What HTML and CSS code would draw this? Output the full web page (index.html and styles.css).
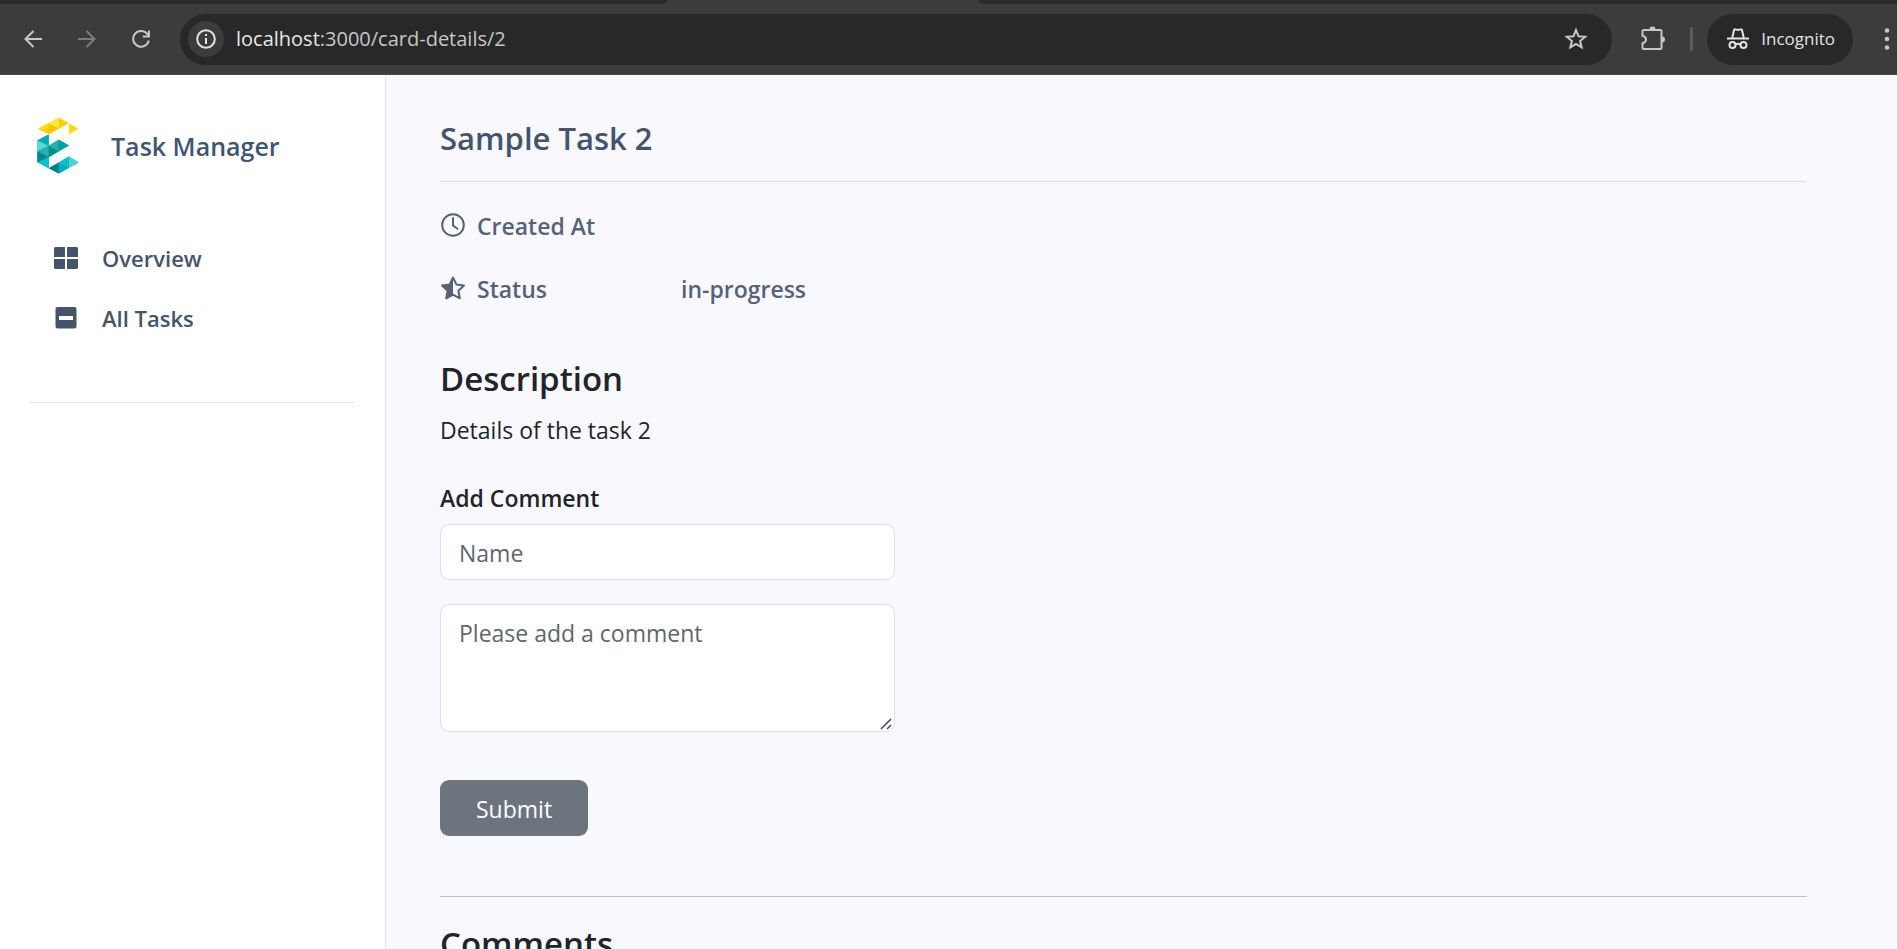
FILE: index.html
```html
<!DOCTYPE html>
<html lang="en">
<head>
<meta charset="utf-8">
<title>Task Manager</title>
<link rel="stylesheet" href="styles.css">
</head>
<body>
<header class="browser">
  <div class="tabstrip"><div class="tab tab-left"></div><div class="tab tab-right"></div></div>
  <div class="toolbar">
    <button class="tool" aria-label="Back"><svg width="18" height="18" viewBox="0 0 18 18"><path d="M9.5 1 1.5 9l8 8M1.5 9H18"/></svg></button>
    <button class="tool tool-disabled" aria-label="Forward" disabled><svg width="18" height="18" viewBox="0 0 18 18"><path d="m8.5 1 8 8-8 8M16.5 9H0"/></svg></button>
    <button class="tool" aria-label="Reload"><svg width="18" height="18" viewBox="0 0 18 18"><path d="M16.8 10.5A7.900 7.900 0 1 1 15 3.600L16.5 5.500M16.900.5V6.500H10.800"/></svg></button>
    <div class="address">
      <button class="site-info" aria-label="View site information"><svg width="20" height="20" viewBox="0 0 20 20"><circle cx="10" cy="10" r="8.800"/><path d="M10 9v6M10 5v2"/></svg></button>
      <div class="url"><span class="host">localhost</span>:3000/card-details/2</div>
      <button class="bookmark" aria-label="Bookmark this tab"><svg width="24" height="24" viewBox="0 0 24 24"><path d="m12 3 2.500 6.200 6.700.5-5.100 4.300 1.600 6.400L12 17l-5.700 3.400L7.900 14 2.800 9.700l6.700-.5z"/></svg></button>
    </div>
    <button class="extensions" aria-label="Extensions"><svg width="26" height="26" viewBox="0 0 26 26"><path d="M4 4h16.500q1 0 1 1v17q0 1-1 1H3.500q-1 0-1-1v-4.800q3.500-.8 3.500-3.700t-3.500-3.700V5q0-1 1.500-1z"/><path class="solid" d="M9.500 3.500a3 3 0 0 1 6 0zM22 10.500a3 3 0 0 1 0 6z"/></svg></button>
    <div class="divider"></div>
    <button class="incognito"><svg width="22" height="22" viewBox="0 0 22 22"><path d="M5.300 9.500 7 2.200Q7.300 1 8.500 1.400L11 2l2.500-.6Q14.700 1 15 2.200l1.700 7.300M0 10.500h22M8.500 16.500q2.500-1.600 5 0"/><circle cx="5.500" cy="17" r="3"/><circle cx="16.500" cy="17" r="3"/></svg>Incognito</button>
    <button class="menu" aria-label="Menu"><svg width="6" height="22" viewBox="0 0 6 22"><circle cx="3" cy="2.500" r="2.300"/><circle cx="3" cy="11" r="2.300"/><circle cx="3" cy="19.500" r="2.300"/></svg></button>
  </div>
</header>
<div class="app">
  <aside class="sidebar">
    <a class="brand" href="#">
      <svg class="logo" width="42" height="57" viewBox="110 80 126 170">
        <path fill="#ffcf00" d="m113 115 62-34 31 17-61 33z"/><path fill="#ffdf00" d="m113 115 32-17v17z"/><path fill="#ffc000" d="m145 98 30 15-30 18z"/><path fill="#ffe840" d="m145 98 30-17v32z"/><path fill="#ffdc00" d="m206 98 29 17-29 16z"/>
        <path fill="#00a0a8" d="m111 150 34-18v34l30-18 31 17-61 35v33l61-35 29 18-60 33-64-34z"/>
        <path fill="#00acb8" d="m111 150 34-18v34z"/><path fill="#5dd9da" d="m111 150 34 16-34 17z"/><path fill="#26b3a7" d="m111 183 34-17v34z"/><path fill="#008891" d="m111 183 34 17-34 15z"/>
        <path fill="#008f93" d="m145 166 30 16-30 18z"/><path fill="#26b3a7" d="m145 166 30-18v34z"/><path fill="#00a0a2" d="m175 148 31 17-31 17z"/>
        <path fill="#00c3d0" d="m111 215 34-15v33z"/><path fill="#00808a" d="m145 233 30-17v33z"/><path fill="#00acbb" d="m175 216 31 16-31 17z"/><path fill="#00c3d0" d="m175 216 31-18v34z"/><path fill="#4ed2cf" d="m206 198 29 18-29 16z"/>
      </svg>
      <span>Task Manager</span>
    </a>
    <nav class="nav">
      <a href="#"><svg width="26" height="24" viewBox="0 0 26 24"><path d="M2 1h10v10H1V2zM14 1h10l1 1v9H14zM1 13h11v10H2l-1-1zM14 13h11v9l-1 1H14z"/></svg>Overview</a>
      <a href="#"><svg width="26" height="24" viewBox="0 0 26 24"><path fill-rule="evenodd" d="M4.500 1h17a2 2 0 0 1 2 2v17.500a2 2 0 0 1-2 2h-17a2 2 0 0 1-2-2V3a2 2 0 0 1 2-2zM6 10v4h14v-4z"/></svg>All Tasks</a>
    </nav>
    <hr>
  </aside>
  <main class="content">
    <h1>Sample Task 2</h1>
    <dl class="facts">
      <dt><svg width="26" height="26" viewBox="0 0 26 26"><circle class="ring" cx="13" cy="12" r="10.800"/><path class="ring" d="M13 5v7.500l4.500 3.300"/></svg>Created At</dt>
      <dd></dd>
      <dt><svg width="26" height="26" viewBox="0 0 26 26"><path class="ring" d="m13 1.500 3.300 6.900 7.700 1-5.600 5.300 1.400 7.600-6.800-3.700-6.800 3.700 1.400-7.600L2 9.400l7.700-1z"/><path d="M13 1.500 9.500 8 2 9.500l5.500 6L6 22.500l7-4z"/></svg>Status</dt>
      <dd>in-progress</dd>
    </dl>
    <h2>Description</h2>
    <p class="details">Details of the task 2</p>
    <form class="comment-form">
      <label for="name">Add Comment</label>
      <input id="name" type="text" placeholder="Name">
      <textarea rows="3" placeholder="Please add a comment" aria-label="Comment"></textarea>
      <button class="submit" type="button">Submit</button>
    </form>
    <section class="comments"><h2>Comments</h2></section>
  </main>
</div>
</body>
</html>
```
FILE: styles.css
```css
* { box-sizing: border-box; }
body {
  margin: 0;
  height: 100vh;
  display: flex;
  flex-direction: column;
  overflow: hidden;
  font: 23px/36px "Open Sans", "Noto Sans", sans-serif;
  color: #212529;
  background: #f9f8ff;
}
button { border: 0; padding: 0; background: none; font: inherit; color: inherit; display: flex; align-items: center; justify-content: center; flex: none; }
svg { flex: none; display: block; }
a { color: inherit; text-decoration: none; }

.browser { flex: none; background: #3c3c3c; color: #c7c7c7; border-bottom: 1px solid #4a4a4a; }
.browser svg { fill: none; stroke: currentColor; stroke-width: 2; }
.tabstrip { height: 4px; display: flex; justify-content: space-between; }
.tab { background: #2b2b2b; }
.tab-left { width: 35.2%; border-bottom-right-radius: 6px 4px; }
.tab-right { width: 48.4%; border-bottom-left-radius: 6px 4px; }
.toolbar { height: 70px; padding-left: 24px; display: flex; align-items: center; }
.tool { width: 18px; margin-right: 36px; }
.tool:nth-of-type(3) { margin-right: 30px; }
.tool-disabled { color: #7c7c7c; }
.address { flex: 1; height: 51px; border-radius: 26px; background: #282828; display: flex; align-items: center; padding: 0 24px 0 8px; }
.site-info { width: 36px; height: 36px; border-radius: 50%; background: #3c3c3c; color: #e3e3e3; }
.url { flex: 1; margin-left: 12px; font-size: 20px; }
.host { color: #e8e8e8; }
.extensions { margin-left: 28px; }
.browser .extensions .solid { fill: currentColor; stroke: none; }
.divider { width: 3px; height: 24px; margin: 0 14px 0 24px; background: #5c5c5c; border-radius: 2px; }
.incognito { height: 51px; padding: 0 18px 0 20px; gap: 12px; border-radius: 26px; background: #282828; color: #e3e3e3; font-size: 17px; }
.menu { margin: 0 7px 0 31px; }
.browser .menu svg { fill: currentColor; stroke: none; }

.app { flex: 1; min-height: 0; display: flex; }
.sidebar { flex: 0 0 386px; padding: 42px 30px 0; background: #fff; border-right: 1px solid #e4e2f0; color: #455569; font-size: 22px; font-weight: 600; }
.brand { display: flex; align-items: center; gap: 32px; padding-left: 7px; font-size: 25px; color: #3f5673; }
.nav { display: flex; flex-direction: column; gap: 24px; padding: 66px 0 66px 23px; }
.nav a { display: flex; align-items: center; gap: 23px; }
.nav svg { fill: currentColor; }
.sidebar hr { margin: 0; border: 0; border-top: 1px solid #e4e2ee; }

.content { flex: 1; min-width: 0; padding: 42px 90px 0 54px; overflow: hidden; }
h1 { margin: 0; padding-bottom: 22px; border-bottom: 1px solid #dedde4; font-size: 31px; line-height: 42px; font-weight: 600; color: #455569; }
.facts { margin: 26px 0 50px; display: grid; grid-template-columns: 241px 1fr; row-gap: 27px; color: #566377; font-weight: 600; }
dt { display: flex; align-items: center; gap: 11px; }
dt svg { fill: currentColor; }
.ring { fill: none; stroke: currentColor; stroke-width: 2; stroke-linejoin: round; stroke-linecap: round; }
dd { margin: 0; }
h2 { margin: 0; font-size: 33px; line-height: 44px; font-weight: 600; }
.details { margin: 11px 0 32px; }
.comment-form { display: flex; flex-direction: column; align-items: flex-start; }
label { font-weight: 600; margin-bottom: 8px; }
input, textarea { width: 33.3%; margin: 0 0 24px; padding: 10px 18px 8px; border: 1px solid #dee0e6; border-radius: 9px; background: #fff; font: inherit; line-height: 36px; color: #212529; }
input { height: 56px; }
textarea { display: block; margin-bottom: 48px; }
textarea::-webkit-resizer { background: url("data:image/svg+xml,%3Csvg xmlns='http://www.w3.org/2000/svg' width='15' height='15'%3E%3Cpath d='M2 13 12 3M8 13l4-4' stroke='%23444' stroke-width='1.5'/%3E%3C/svg%3E") no-repeat; }
::placeholder { color: #5f666c; opacity: 1; }
.submit { height: 56px; padding: 1px 36px 0; border-radius: 9px; background: #6c757d; color: #fff; }
.comments { margin-top: 60px; padding-top: 25px; border-top: 1px solid #bfbfc5; }
```
